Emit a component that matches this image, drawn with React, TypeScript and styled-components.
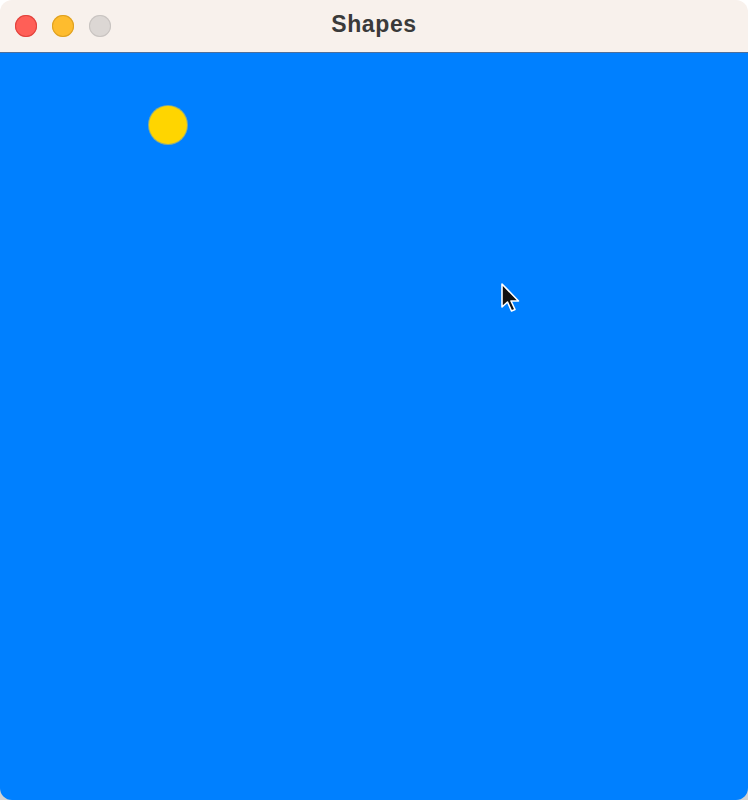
import React from "react";
import styled, { createGlobalStyle } from "styled-components";

const Global = createGlobalStyle`
  html, body { margin: 0; padding: 0; }
  body {
    width: 748px;
    height: 800px;
    overflow: hidden;
    background: linear-gradient(#ffffff 0 400px, #d2d2d2 400px);
    font-family: "Inter", "Liberation Sans", sans-serif;
  }
`;

const Window = styled.div`
  width: 748px;
  height: 800px;
  border-radius: 12px;
  overflow: hidden;
  display: flex;
  flex-direction: column;
`;

const TitleBar = styled.div`
  height: 52px;
  flex: 0 0 52px;
  background: #f8f1ec;
  border-bottom: 1px solid #4d6f9c;
  display: grid;
  grid-template-columns: 1fr auto 1fr;
  align-items: center;
  padding: 0 15px;
`;

const Lights = styled.div`
  display: flex;
  gap: 15px;
  align-items: center;
  margin-top: -1px;
`;

const Light = styled.span<{ $fill: string; $edge: string }>`
  width: 22px;
  height: 22px;
  border-radius: 50%;
  background: ${(p) => p.$fill};
  box-shadow: inset 0 0 0 1px ${(p) => p.$edge};
`;

const Title = styled.div`
  font-family: "Liberation Sans", "Inter", sans-serif;
  font-weight: 700;
  font-size: 23px;
  color: #3a3a3a;
  letter-spacing: 0.6px;
  margin-top: -3px;
`;

const Canvas = styled.div`
  flex: 1;
  background: #0080ff;
  position: relative;
`;

const Sun = styled.div`
  position: absolute;
  left: 149px;
  top: 53px;
  width: 38px;
  height: 38px;
  border-radius: 50%;
  background: #ffd500;
  box-shadow: 0 0 0 1px rgba(230, 200, 60, 0.6);
`;

const Cursor = styled.svg`
  position: absolute;
  left: 500px;
  top: 229px;
`;

export default function App() {
  return (
    <>
      <Global />
      <Window>
        <TitleBar>
          <Lights>
            <Light $fill="#ff5f57" $edge="#e0443e" />
            <Light $fill="#febc2e" $edge="#dea123" />
            <Light $fill="#dcd7d4" $edge="#c9c4c1" />
          </Lights>
          <Title>Shapes</Title>
          <span />
        </TitleBar>
        <Canvas>
          <Sun />
          <Cursor width="24" height="34" viewBox="0 0 24 34">
            <path
              d="M2 2 L2 25 L7.5 20 L11.5 29 L15 27.5 L11 19 L18.5 19 Z"
              fill="#111"
              stroke="#fff"
              strokeWidth="1.6"
              strokeLinejoin="round"
            />
          </Cursor>
        </Canvas>
      </Window>
    </>
  );
}
